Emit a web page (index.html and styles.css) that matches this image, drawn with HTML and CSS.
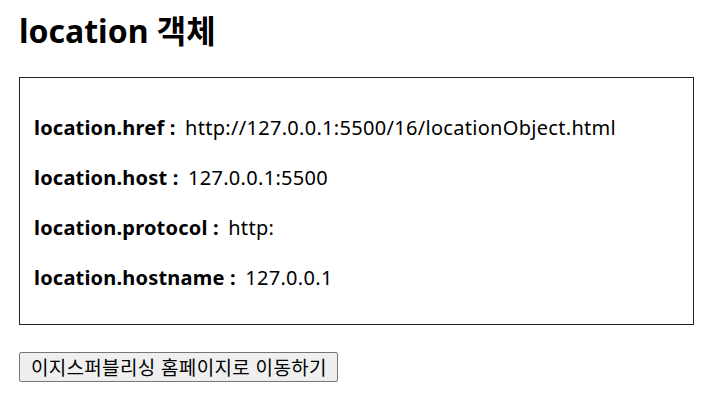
FILE: index.html
```
<!DOCTYPE html>
<html lang="ko">

<head>
    <meta charset="UTF-8">
    <meta name="viewport" content="width=device-width, initial-scale=1.0">
    <title>location 객체</title>
    <link rel="stylesheet" href="styles.css">
</head>

<body>
    <h1 class="title">location 객체</h1>

    <div class="info">
        <p><b>location.href : </b>http://127.0.0.1:5500/16/locationObject.html</p>
        <p><b>location.host : </b>127.0.0.1:5500</p>
        <p><b>location.protocol : </b>http:</p>
        <p><b>location.hostname : </b>127.0.0.1</p>
    </div>

    <button class="go-btn">이지스퍼블리싱 홈페이지로 이동하기</button>
</body>

</html>
```
FILE: styles.css
```
body {
    margin: 0;
    padding: 0 9px 0 19px;
    font-family: "Noto Sans", "Noto Sans CJK KR", sans-serif;
    color: #000;
    background-color: #fff;
}

.title {
    margin: 8px 0 0;
    font-size: 32px;
    line-height: 46px;
    font-weight: bold;
}

.info {
    margin-top: 23px;
    height: 248px;
    box-sizing: border-box;
    border: 1px solid #222;
    padding: 36px 14px 0;
    display: flex;
    flex-direction: column;
    gap: 22px;
}

.info p {
    margin: 0;
    font-size: 20px;
    line-height: 28px;
    letter-spacing: 0.3px;
}

.info b {
    margin-right: 4px;
    letter-spacing: 0.2px;
}

.go-btn {
    margin-top: 27px;
    font-family: "Noto Sans CJK KR", sans-serif;
    font-size: 19px;
    line-height: 26px;
    letter-spacing: 0.3px;
    padding: 0 10px 0 11px;
    height: 30px;
    background-color: #efefef;
    border: 1px solid #767676;
    border-radius: 2px;
}
```
